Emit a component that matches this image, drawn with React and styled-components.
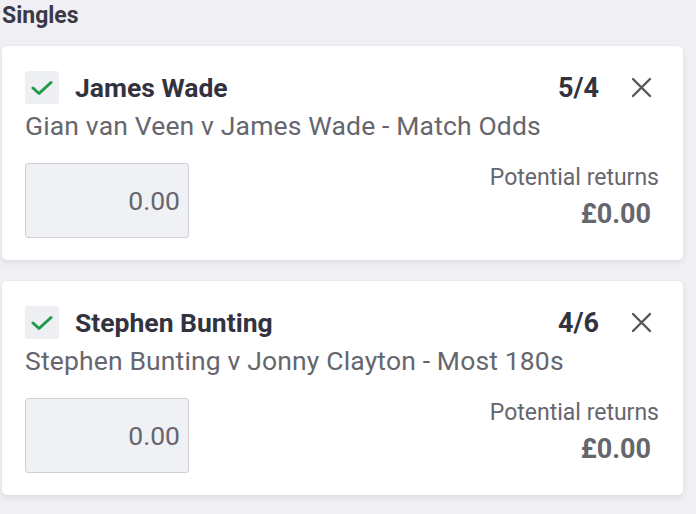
import React from "react";
import styled, { createGlobalStyle } from "styled-components";

const GlobalStyle = createGlobalStyle`
  html, body {
    margin: 0;
    padding: 0;
    background: #efeff4;
    font-family: Roboto, "Liberation Sans", sans-serif;
  }
`;

const Page = styled.div`
  width: 696px;
  height: 514px;
  padding: 0 13px 0 2px;
  box-sizing: border-box;
  overflow: hidden;
`;

const Title = styled.div`
  font-size: 23px;
  font-weight: 700;
  color: #3a3a47;
  line-height: 26px;
  padding-top: 3px;
  margin-bottom: 17px;
`;

const List = styled.div`
  display: flex;
  flex-direction: column;
  gap: 21px;
`;

const Card = styled.div`
  background: #fff;
  border-radius: 5px;
  box-shadow: 0 3px 6px rgba(0, 0, 0, 0.07), 0 0 2px rgba(0, 0, 0, 0.05);
  padding: 25px 24px 22px 23px;
`;

const Header = styled.div`
  display: flex;
  align-items: center;
  height: 33px;
  padding-right: 7px;
`;

const Check = styled.div`
  width: 34px;
  height: 33px;
  border-radius: 3px;
  background: #eeeff3;
  display: flex;
  align-items: center;
  justify-content: center;
  flex-shrink: 0;
`;

const Selection = styled.div`
  flex: 1;
  margin-left: 16px;
  font-size: 26.5px;
  font-weight: 700;
  color: #33333f;
`;

const Odds = styled.div`
  font-size: 27px;
  font-weight: 700;
  color: #33333f;
  margin-right: 31px;
`;

const Close = styled.button`
  border: 0;
  background: none;
  padding: 0;
  width: 22px;
  height: 22px;
  display: flex;
  align-items: center;
  justify-content: center;
`;

const Market = styled.div`
  font-size: 26.5px;
  letter-spacing: 0.15px;
  color: #66666e;
  line-height: 34px;
  margin-top: 5px;
  white-space: nowrap;
`;

const StakeRow = styled.div`
  display: flex;
  justify-content: space-between;
  align-items: flex-start;
  margin-top: 20px;
`;

const Stake = styled.div`
  width: 164px;
  height: 75px;
  box-sizing: border-box;
  border: 1px solid #cfd0d4;
  border-radius: 3px;
  background: #f0f1f5;
  display: flex;
  align-items: center;
  justify-content: flex-end;
  padding-right: 8px;
  font-size: 26.5px;
  color: #66666e;
`;

const Returns = styled.div`
  display: flex;
  flex-direction: column;
  align-items: flex-end;
`;

const ReturnsLabel = styled.div`
  font-size: 23px;
  line-height: 30px;
  color: #66666e;
`;

const ReturnsValue = styled.div`
  font-size: 27px;
  font-weight: 700;
  line-height: 36px;
  color: #66666e;
  margin: 3px 8px 0 0;
`;

const bets = [
  { name: "James Wade", odds: "5/4", market: "Gian van Veen v James Wade - Match Odds" },
  { name: "Stephen Bunting", odds: "4/6", market: "Stephen Bunting v Jonny Clayton - Most 180s" },
];

const CheckIcon = () => (
  <svg width="22" height="16" viewBox="0 0 22 16">
    <path d="M2 8 L8 13.5 L20 2.5" fill="none" stroke="#1e9a4b" strokeWidth="3" strokeLinecap="round" strokeLinejoin="round" />
  </svg>
);

const CloseIcon = () => (
  <svg width="21" height="21" viewBox="0 0 21 21">
    <path d="M2 2 L19 19 M19 2 L2 19" stroke="#55555c" strokeWidth="2.4" strokeLinecap="round" />
  </svg>
);

const BetCard = ({ bet }) => (
  <Card>
    <Header>
      <Check>
        <CheckIcon />
      </Check>
      <Selection>{bet.name}</Selection>
      <Odds>{bet.odds}</Odds>
      <Close>
        <CloseIcon />
      </Close>
    </Header>
    <Market>{bet.market}</Market>
    <StakeRow>
      <Stake>0.00</Stake>
      <Returns>
        <ReturnsLabel>Potential returns</ReturnsLabel>
        <ReturnsValue>£0.00</ReturnsValue>
      </Returns>
    </StakeRow>
  </Card>
);

const App = () => (
  <>
    <GlobalStyle />
    <Page>
      <Title>Singles</Title>
      <List>
        {bets.map((bet) => (
          <BetCard key={bet.name} bet={bet} />
        ))}
      </List>
    </Page>
  </>
);

export default App;
